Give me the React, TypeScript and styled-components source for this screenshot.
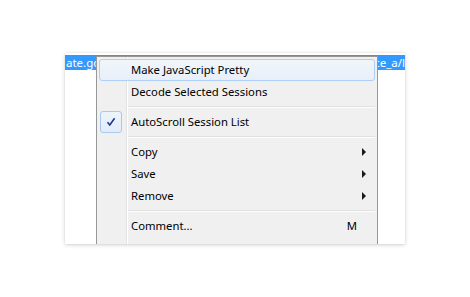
import styled, { createGlobalStyle } from "styled-components";

const GlobalStyle = createGlobalStyle`
  html, body {
    margin: 0;
    padding: 0;
    background: #ffffff;
  }
  body {
    font-family: "Noto Sans", "Liberation Sans", sans-serif;
  }
`;

const Page = styled.div`
  width: 470px;
  height: 297px;
  padding: 53px 0 0 65px;
  box-sizing: border-box;
`;

const Card = styled.div`
  position: relative;
  width: 340px;
  height: 191px;
  background: #ffffff;
  overflow: hidden;
  box-shadow: 0 1px 4px rgba(0, 0, 0, 0.18), 0 0 1px rgba(0, 0, 0, 0.12);
  padding-top: 2px;
  box-sizing: border-box;
`;

const SelectedRow = styled.div`
  height: 15px;
  background: #3399ff;
  color: #ffffff;
  font-size: 11.5px;
  line-height: 15px;
  display: flex;
  justify-content: space-between;
  white-space: nowrap;
  overflow: hidden;
  padding-left: 1px;
`;

const Menu = styled.div`
  position: absolute;
  left: 31px;
  top: 3px;
  width: 282px;
  height: 200px;
  box-sizing: border-box;
  background: #f0f0f0;
  border: 1px solid #979797;
  padding: 2px 2px 0 2px;
  font-size: 11.3px;
  color: #000000;
`;

const Gutter = styled.div`
  position: absolute;
  left: 29px;
  top: 0;
  bottom: 0;
  width: 1px;
  background: #e2e3e3;
  border-right: 1px solid #ffffff;
`;

const Item = styled.div<{ $hot?: boolean }>`
  position: relative;
  height: 22px;
  box-sizing: border-box;
  display: flex;
  align-items: center;
  padding: 0 0 0 31px;
  border: 1px solid ${(p) => (p.$hot ? "#aecff7" : "transparent")};
  border-radius: 3px;
  background: ${(p) =>
    p.$hot ? "linear-gradient(#f2f6fb, #e8eff9)" : "transparent"};
`;

const Label = styled.span`
  flex: 1;
  white-space: nowrap;
  line-height: 20px;
`;

const Shortcut = styled.span`
  margin-right: 17px;
  line-height: 20px;
`;

const Arrow = styled.span`
  width: 0;
  height: 0;
  margin-right: 8px;
  border-top: 4px solid transparent;
  border-bottom: 4px solid transparent;
  border-left: 4px solid #1a1a1a;
`;

const CheckBox = styled.span`
  position: absolute;
  left: 0;
  top: -1px;
  width: 22px;
  height: 22px;
  box-sizing: border-box;
  border: 1px solid #a8c8ec;
  border-radius: 3px;
  background: linear-gradient(#eef4fb, #e2ecf8);
  display: flex;
  align-items: center;
  justify-content: center;
`;

const Separator = styled.div`
  height: 8px;
  display: flex;
  flex-direction: column;
  justify-content: center;
  padding-left: 29px;
  &::before {
    content: "";
    display: block;
    height: 1px;
    background: #e0e0e0;
  }
  &::after {
    content: "";
    display: block;
    height: 1px;
    background: #ffffff;
  }
`;

function Check() {
  return (
    <svg width="10" height="10" viewBox="0 0 10 10">
      <path d="M1.5 5.2 L3.8 8 L8.6 1.2" fill="none" stroke="#1b3a8c" strokeWidth="1.6" />
    </svg>
  );
}

export default function App() {
  return (
    <>
      <GlobalStyle />
      <Page>
        <Card>
          <SelectedRow>
            <span>ate.google</span>
            <span>ate_a/l</span>
          </SelectedRow>
          <Menu>
            <Gutter />
            <Item $hot>
              <Label>Make JavaScript Pretty</Label>
            </Item>
            <Item>
              <Label>Decode Selected Sessions</Label>
            </Item>
            <Separator />
            <Item>
              <CheckBox>
                <Check />
              </CheckBox>
              <Label>AutoScroll Session List</Label>
            </Item>
            <Separator />
            <Item>
              <Label>Copy</Label>
              <Arrow />
            </Item>
            <Item>
              <Label>Save</Label>
              <Arrow />
            </Item>
            <Item>
              <Label>Remove</Label>
              <Arrow />
            </Item>
            <Separator />
            <Item>
              <Label>Comment...</Label>
              <Shortcut>M</Shortcut>
            </Item>
          </Menu>
        </Card>
      </Page>
    </>
  );
}
